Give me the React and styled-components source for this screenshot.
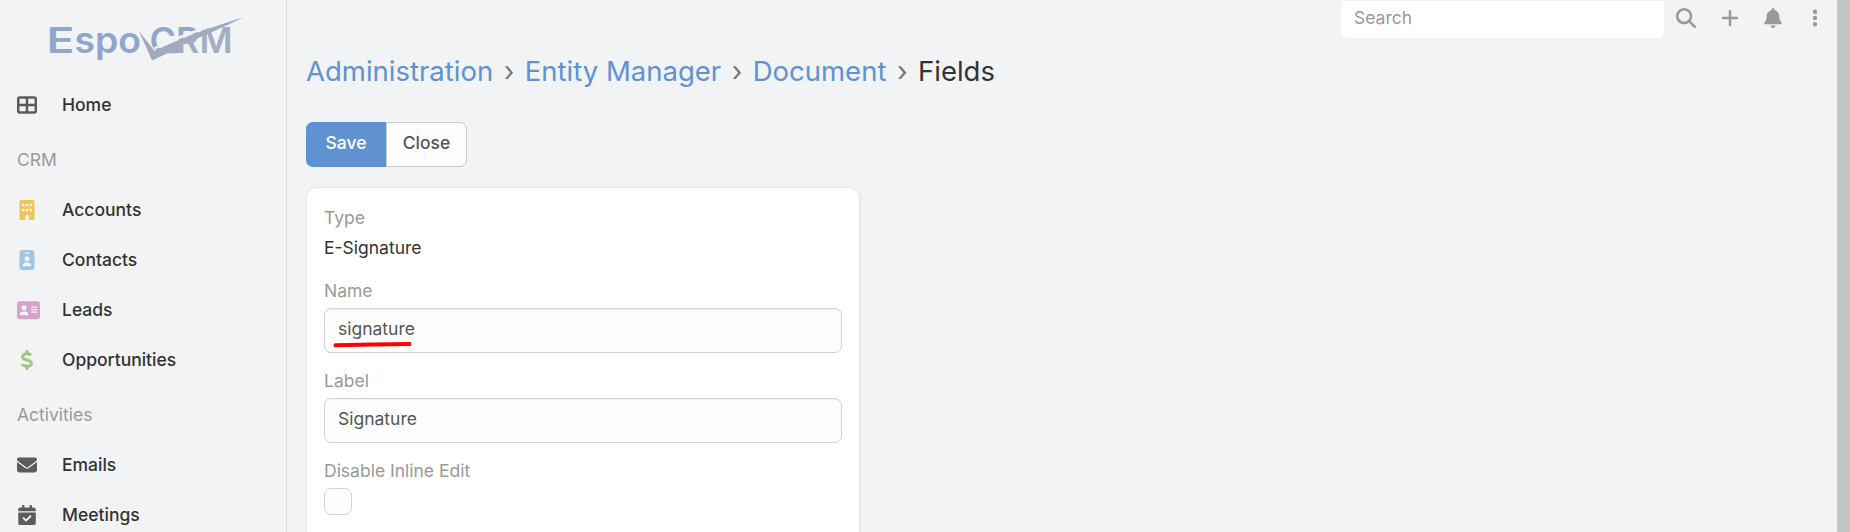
import React from "react";
import styled, { createGlobalStyle } from "styled-components";
import {
  FaTableCellsLarge,
  FaBuilding,
  FaIdBadge,
  FaAddressCard,
  FaDollarSign,
  FaEnvelope,
  FaCalendarCheck,
  FaMagnifyingGlass,
  FaPlus,
  FaBell,
  FaEllipsisVertical,
} from "react-icons/fa6";

const GlobalStyle = createGlobalStyle`
  * { box-sizing: border-box; }
  body {
    margin: 0;
    overflow: hidden;
    background: #f1f3f5;
    color: #333;
    font-family: Inter, "Liberation Sans", sans-serif;
    font-size: 17.5px;
    -webkit-font-smoothing: antialiased;
  }
`;

const Page = styled.div`
  display: flex;
  height: 532px;
  overflow: hidden;
`;

const Sidebar = styled.nav`
  flex: none;
  width: 287px;
  border-right: 1px solid #dcdee0;
`;

const LogoBox = styled.div`
  height: 80px;
  padding: 14px 0 0 44px;

  svg { display: block; }
`;

const NavItem = styled.a`
  display: flex;
  align-items: center;
  gap: 25px;
  height: 50px;
  padding-left: 17px;
  font-weight: 500;
  color: #333;
`;

const NavText = styled.span`
  padding-bottom: 2px;
`;

const NavIcon = styled.span`
  display: flex;
  justify-content: safe center;
  width: 20px;
  color: ${(p) => p.$color || "#5c5c5c"};

  svg {
    flex: none;
    width: ${(p) => (p.$width ? `${p.$width}px` : "auto")};
    height: ${(p) => (p.$width ? 20.5 : 20)}px;
    stroke-width: ${(p) => p.$stroke || 0};
  }
`;

const NavDivider = styled.div`
  height: 55px;
  padding-left: 17px;
  line-height: 60px;
  color: #999;
`;

const Main = styled.main`
  flex: 1;
  padding-left: 19px;
`;

const TopBar = styled.header`
  display: flex;
  justify-content: flex-end;
  height: 38px;
  padding-top: 1px;
`;

const SearchInput = styled.input`
  width: 323px;
  height: 37px;
  padding: 0 13px 5px;
  border: 0;
  border-radius: 0 0 6px 6px;
  background: #fff;
  font: inherit;

  &::placeholder { color: #999; opacity: 1; }
`;

const TopActions = styled.div`
  display: flex;
  padding-bottom: 4px;
`;

const TopButton = styled.span`
  display: flex;
  align-items: center;
  justify-content: center;
  width: ${(p) => p.$width || 43}px;
  color: #999;

  svg {
    width: auto;
    height: 20px;
  }
`;

const Breadcrumbs = styled.h3`
  display: flex;
  align-items: center;
  gap: 10.5px;
  height: 38px;
  margin: 14px 0 32px;
  font-size: 27.5px;
  font-weight: 400;
  line-height: 38px;
  white-space: nowrap;
`;

const Crumb = styled.a`
  color: #5f92d2;
`;

const Separator = styled.span`
  color: #777;
`;

const ButtonGroup = styled.div`
  display: flex;
  margin-bottom: 21px;
`;

const Button = styled.button`
  width: ${(p) => p.$width}px;
  height: 45px;
  padding: 0 0 4px;
  border: 1px solid ${(p) => (p.$primary ? "#6092d1" : "#c5cbce")};
  border-left-width: ${(p) => (p.$primary ? 0 : 1)}px;
  border-right-width: ${(p) => (p.$primary ? 0 : 1)}px;
  border-radius: ${(p) => (p.$primary ? "7px 0 0 7px" : "0 7px 7px 0")};
  background: ${(p) => (p.$primary ? "#6092d1" : "#fdfdfd")};
  color: ${(p) => (p.$primary ? "#fff" : "#555")};
  font: inherit;
  font-weight: 500;
`;

const Panel = styled.section`
  display: flex;
  flex-direction: column;
  gap: 15px;
  width: 552px;
  height: 400px;
  margin-left: 1px;
  padding: 17px;
  border-radius: 9px;
  background: #fff;
  box-shadow: 0 0 2px rgba(0, 0, 0, 0.13), 1px 1px 4px rgba(0, 0, 0, 0.05);
`;

const Field = styled.div`
  position: relative;
`;

const Label = styled.label`
  display: block;
  height: 26px;
  margin-bottom: 4px;
  line-height: 26px;
  color: #999;
`;

const Value = styled.div`
  height: 28px;
  line-height: 26px;
`;

const TextInput = styled.input`
  display: block;
  width: 518px;
  height: 45px;
  padding: 0 13px 5px;
  border: 1px solid #cfd3d5;
  border-radius: 7px;
  background: #fdfdfd;
  box-shadow: inset 0 1px 1px rgba(0, 0, 0, 0.05);
  color: #555;
  font: inherit;
`;

const Checkbox = styled.input`
  display: block;
  appearance: none;
  width: 28px;
  height: 27px;
  margin: 0;
  border: 1px solid #cfd3d5;
  border-radius: 7px;
  background: #fdfdfd;
`;

const Underline = styled.svg`
  position: absolute;
  left: 8px;
  top: 62px;
`;

const Scrollbar = styled.div`
  flex: none;
  width: 13px;
  background: #c4c4c4;
`;

const LogoText = styled.text`
  font-family: Inter, "Liberation Sans", sans-serif;
  font-size: 35.5px;
  font-weight: 600;
`;

function Logo() {
  return (
    <svg width="204" height="50" viewBox="44 14 204 50">
      <defs>
        <linearGradient
          id="crm"
          gradientUnits="userSpaceOnUse"
          x1="189.3"
          y1="2.6"
          x2="208.7"
          y2="59.4"
        >
          <stop offset="0.5" stopColor="#8fa7cc" />
          <stop offset="0.5" stopColor="#a2aec1" />
        </linearGradient>
      </defs>
      <LogoText x="46.5" y="53" textLength="28" lengthAdjust="spacingAndGlyphs" fill="#8fa7cc">
        E
      </LogoText>
      <LogoText x="74.5" y="53" textLength="66.5" lengthAdjust="spacingAndGlyphs" fill="#8fa7cc">
        spo
      </LogoText>
      <LogoText x="149.5" y="53" textLength="83" lengthAdjust="spacingAndGlyphs" fill="url(#crm)">
        CRM
      </LogoText>
      <path d="M154.5 48.5 Q188 32 242 16" fill="none" stroke="#f1f3f5" strokeWidth="2.4" />
      <path d="M139 31 L154.5 51 Q190 33.5 243.5 17.3 Q214 32 180 45.5 L180 53 L167 53.5 L152 60.5 Z" fill="#a0abc0" />
    </svg>
  );
}

const sections = [
  { items: [{ text: "Home", icon: FaTableCellsLarge }] },
  {
    title: "CRM",
    items: [
      { text: "Accounts", icon: FaBuilding, color: "#edc755" },
      { text: "Contacts", icon: FaIdBadge, color: "#a4c5e0" },
      { text: "Leads", icon: FaAddressCard, color: "#d6a2c9", width: 23 },
      { text: "Opportunities", icon: FaDollarSign, color: "#9fc97f", stroke: 16 },
    ],
  },
  {
    title: "Activities",
    items: [
      { text: "Emails", icon: FaEnvelope },
      { text: "Meetings", icon: FaCalendarCheck },
    ],
  },
];

export default function App() {
  return (
    <>
      <GlobalStyle />
      <Page>
        <Sidebar>
          <LogoBox>
            <Logo />
          </LogoBox>
          {sections.map((section, i) => (
            <React.Fragment key={i}>
              {section.title && <NavDivider>{section.title}</NavDivider>}
              {section.items.map(({ text, icon: Icon, color, width, stroke }) => (
                <NavItem key={text}>
                  <NavIcon $color={color} $width={width} $stroke={stroke}>
                    <Icon />
                  </NavIcon>
                  <NavText>{text}</NavText>
                </NavItem>
              ))}
            </React.Fragment>
          ))}
        </Sidebar>
        <Main>
          <TopBar>
            <SearchInput placeholder="Search" />
            <TopActions>
              <TopButton $width={44}><FaMagnifyingGlass /></TopButton>
              <TopButton $width={44}><FaPlus /></TopButton>
              <TopButton $width={41}><FaBell /></TopButton>
              <TopButton $width={44}><FaEllipsisVertical /></TopButton>
            </TopActions>
          </TopBar>
          <Breadcrumbs>
            <Crumb>Administration</Crumb>
            <Separator>›</Separator>
            <Crumb>Entity Manager</Crumb>
            <Separator>›</Separator>
            <Crumb>Document</Crumb>
            <Separator>›</Separator>
            <span>Fields</span>
          </Breadcrumbs>
          <ButtonGroup>
            <Button $primary $width={80}>Save</Button>
            <Button $width={81}>Close</Button>
          </ButtonGroup>
          <Panel>
            <Field>
              <Label>Type</Label>
              <Value>E-Signature</Value>
            </Field>
            <Field>
              <Label>Name</Label>
              <TextInput defaultValue="signature" />
              <Underline width="82" height="10" viewBox="0 0 82 10">
                <path d="M3.5 5.2 Q40 4.4 77.5 4" fill="none" stroke="#fe0000" strokeWidth="4" strokeLinecap="round" />
              </Underline>
            </Field>
            <Field>
              <Label>Label</Label>
              <TextInput defaultValue="Signature" />
            </Field>
            <Field>
              <Label>Disable Inline Edit</Label>
              <Checkbox type="checkbox" />
            </Field>
          </Panel>
        </Main>
        <Scrollbar />
      </Page>
    </>
  );
}
